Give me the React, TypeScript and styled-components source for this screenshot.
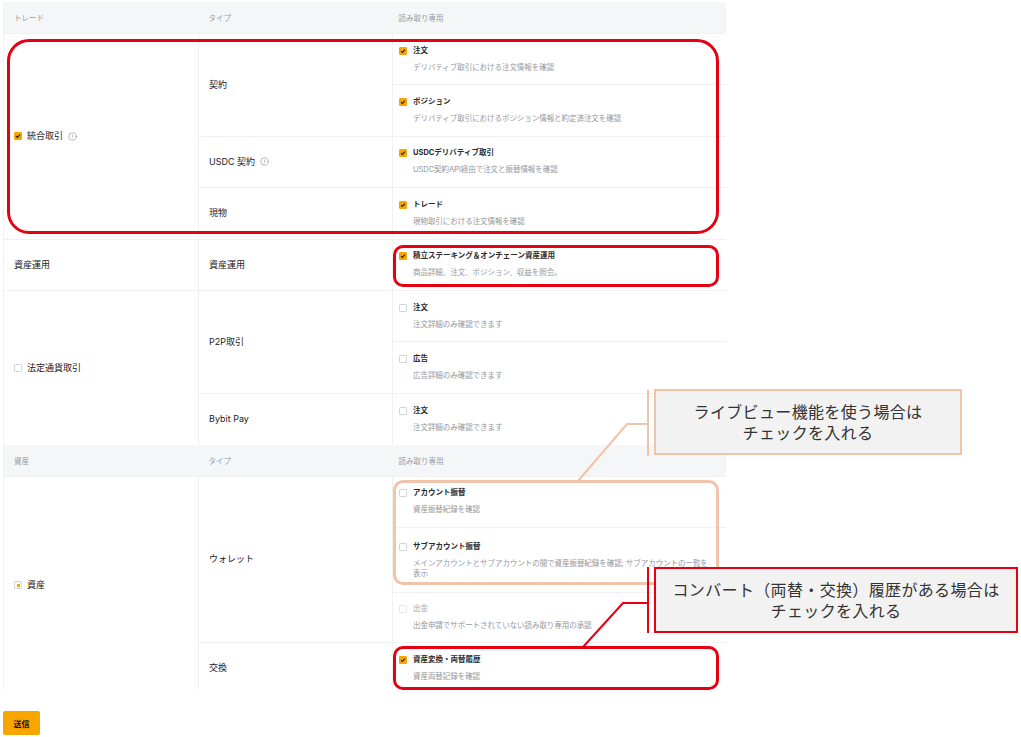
import styled, { createGlobalStyle } from "styled-components";
import { CircleAlert } from "lucide-react";

type BoxState = "checked" | "unchecked" | "indeterminate" | "disabled";

type Item = {
  label: string;
  desc: string;
  state: BoxState;
  height?: number;
};

type TypeRow = {
  name: string;
  info?: boolean;
  items: Item[];
};

type Group = {
  name: string;
  state?: BoxState;
  info?: boolean;
  types: TypeRow[];
};

type Section = {
  head: [string, string, string];
  groups: Group[];
};

const sections: Section[] = [
  {
    head: ["トレード", "タイプ", "読み取り専用"],
    groups: [
      {
        name: "統合取引",
        state: "checked",
        info: true,
        types: [
          {
            name: "契約",
            items: [
              { label: "注文", desc: "デリバティブ取引における注文情報を確認", state: "checked" },
              { label: "ポジション", desc: "デリバティブ取引におけるポジション情報と約定済注文を確認", state: "checked" },
            ],
          },
          {
            name: "USDC 契約",
            info: true,
            items: [{ label: "USDCデリバティブ取引", desc: "USDC契約API経由で注文と振替情報を確認", state: "checked" }],
          },
          {
            name: "現物",
            items: [{ label: "トレード", desc: "現物取引における注文情報を確認", state: "checked" }],
          },
        ],
      },
      {
        name: "資産運用",
        types: [
          {
            name: "資産運用",
            items: [{ label: "積立ステーキング＆オンチェーン資産運用", desc: "商品詳細、注文、ポジション、収益を照会。", state: "checked" }],
          },
        ],
      },
      {
        name: "法定通貨取引",
        state: "unchecked",
        types: [
          {
            name: "P2P取引",
            items: [
              { label: "注文", desc: "注文詳細のみ確認できます", state: "unchecked" },
              { label: "広告", desc: "広告詳細のみ確認できます", state: "unchecked" },
            ],
          },
          {
            name: "Bybit Pay",
            items: [{ label: "注文", desc: "注文詳細のみ確認できます", state: "unchecked" }],
          },
        ],
      },
    ],
  },
  {
    head: ["資産", "タイプ", "読み取り専用"],
    groups: [
      {
        name: "資産",
        state: "indeterminate",
        types: [
          {
            name: "ウォレット",
            items: [
              { label: "アカウント振替", desc: "資産振替紀録を確認", state: "unchecked" },
              {
                label: "サブアカウント振替",
                desc: "メインアカウントとサブアカウントの間で資産振替紀録を確認; サブアカウントの一覧を\n表示",
                state: "unchecked",
                height: 65,
              },
              { label: "出金", desc: "出金申請でサポートされていない読み取り専用の承認", state: "disabled", height: 50 },
            ],
          },
          {
            name: "交換",
            items: [{ label: "資産変換・両替履歴", desc: "資産両替記録を確認", state: "checked" }],
          },
        ],
      },
    ],
  },
];

/* style */
const GlobalStyle = createGlobalStyle`
  html, body {
    margin: 0;
    background: #ffffff;
  }
  body {
    font-family: "Inter", "Noto Sans CJK JP", sans-serif;
    color: #1e2026;
  }
`;

const Page = styled.div`
  position: relative;
  width: 1021px;
  height: 737px;
  padding: 2px 3px 0;
  box-sizing: border-box;
  overflow: hidden;
`;

const TableBox = styled.div`
  width: 723px;
  height: 688px;
  overflow: hidden;
`;

const Table = styled.table`
  width: 723px;
  border-collapse: collapse;
  table-layout: fixed;
  border-left: 1px solid #f3f3f3;
  border-right: 1px solid #f3f3f3;
`;

const HeadCell = styled.th<{ $pad: number }>`
  height: 31px;
  padding: 0 0 0 ${(p) => p.$pad}px;
  background: #f4f6f8;
  color: #9a9ca0;
  font-size: 7.5px;
  font-weight: 400;
  text-align: left;
  vertical-align: middle;
`;

const Cell = styled.td<{ $pad: number }>`
  padding: 0 0 0 ${(p) => p.$pad}px;
  border-top: 1px solid #f1f1f1;
  border-right: 1px solid #f1f1f1;
  vertical-align: middle;
  font-size: 9px;
  color: #1e2026;
`;

const NameLine = styled.div`
  display: flex;
  align-items: center;
  gap: 5px;
  line-height: 12px;
`;

const InfoIcon = styled(CircleAlert)`
  color: #8a8d93;
`;

const ItemCell = styled.td`
  padding: 0 6px;
  border-top: 1px solid #f1f1f1;
  vertical-align: middle;
`;

const ItemBody = styled.div`
  display: flex;
  flex-direction: column;
  gap: 7px;
`;

const ItemLabel = styled.div<{ $muted: boolean }>`
  display: flex;
  align-items: center;
  gap: 6px;
  font-size: 7.5px;
  line-height: 10px;
  font-weight: 700;
  color: ${(p) => (p.$muted ? "#c4c6ca" : "#2a2c31")};
`;

const ItemDesc = styled.div`
  padding-left: 14px;
  font-size: 7.5px;
  line-height: 10px;
  letter-spacing: -0.05px;
  color: #94979c;
  white-space: pre;
`;

const Box = styled.span<{ $state: BoxState }>`
  display: inline-flex;
  align-items: center;
  justify-content: center;
  flex: none;
  width: 8px;
  height: 8px;
  box-sizing: border-box;
  border-radius: 1px;
  border: 1px solid
    ${(p) =>
      p.$state === "checked" ? "#f7a600" : p.$state === "disabled" ? "#e6e7e9" : "#d3d5d9"};
  background: ${(p) => (p.$state === "checked" ? "#f7a600" : "#ffffff")};
`;

const Dot = styled.span`
  width: 3px;
  height: 3px;
  background: #f7a600;
`;

const SubmitButton = styled.button`
  display: block;
  margin-top: 21px;
  width: 37px;
  height: 24px;
  padding: 0;
  border: none;
  border-radius: 2px;
  background: #f7a600;
  color: #121214;
  font-family: "Inter", "Noto Sans CJK JP", sans-serif;
  font-size: 8px;
  font-weight: 700;
`;

const Frame = styled.div<{ $x: number; $y: number; $w: number; $h: number; $color: string; $r: number }>`
  position: absolute;
  left: ${(p) => p.$x}px;
  top: ${(p) => p.$y}px;
  width: ${(p) => p.$w}px;
  height: ${(p) => p.$h}px;
  box-sizing: border-box;
  border: 3px solid ${(p) => p.$color};
  border-radius: ${(p) => p.$r}px;
  pointer-events: none;
`;

const Callout = styled.div<{ $x: number; $y: number; $w: number; $color: string }>`
  position: absolute;
  left: ${(p) => p.$x}px;
  top: ${(p) => p.$y}px;
  width: ${(p) => p.$w}px;
  height: 66px;
  box-sizing: border-box;
  display: flex;
  align-items: center;
  justify-content: center;
  border: 2px solid ${(p) => p.$color};
  background: #f2f2f2;
  color: #333333;
  font-family: "Noto Sans CJK JP", sans-serif;
  font-size: 16px;
  line-height: 21px;
  letter-spacing: 0.35px;
  text-align: center;
  white-space: pre;
`;

const Leaders = styled.svg`
  position: absolute;
  left: 0;
  top: 0;
  pointer-events: none;
`;

const Check = ({ state }: { state: BoxState }) => (
  <Box $state={state}>
    {state === "checked" && (
      <svg width="6" height="6" viewBox="0 0 6 6">
        <path d="M1 3.1 L2.4 4.4 L5 1.6" fill="none" stroke="#1e2026" strokeWidth="1.1" />
      </svg>
    )}
    {state === "indeterminate" && <Dot />}
  </Box>
);

const App = () => {
  const rows: JSX.Element[] = [];

  sections.forEach((section, si) => {
    rows.push(
      <tr key={`h${si}`}>
        <HeadCell $pad={10}>{section.head[0]}</HeadCell>
        <HeadCell $pad={10}>{section.head[1]}</HeadCell>
        <HeadCell $pad={6}>{section.head[2]}</HeadCell>
      </tr>
    );
    section.groups.forEach((group, gi) => {
      const groupSpan = group.types.reduce((n, t) => n + t.items.length, 0);
      group.types.forEach((type, ti) => {
        type.items.forEach((item, ii) => {
          rows.push(
            <tr key={`${si}-${gi}-${ti}-${ii}`} style={{ height: item.height ?? 51.4 }}>
              {ti === 0 && ii === 0 && (
                <Cell $pad={10} rowSpan={groupSpan}>
                  <NameLine>
                    {group.state && <Check state={group.state} />}
                    {group.name}
                    {group.info && <InfoIcon size={9} strokeWidth={1.6} />}
                  </NameLine>
                </Cell>
              )}
              {ii === 0 && (
                <Cell $pad={10} rowSpan={type.items.length}>
                  <NameLine>
                    {type.name}
                    {type.info && <InfoIcon size={9} strokeWidth={1.6} />}
                  </NameLine>
                </Cell>
              )}
              <ItemCell>
                <ItemBody>
                  <ItemLabel $muted={item.state === "disabled"}>
                    <Check state={item.state} />
                    {item.label}
                  </ItemLabel>
                  <ItemDesc>{item.desc}</ItemDesc>
                </ItemBody>
              </ItemCell>
            </tr>
          );
        });
      });
    });
  });

  return (
    <Page>
      <GlobalStyle />
      <TableBox>
        <Table>
          <colgroup>
            <col style={{ width: 195 }} />
            <col style={{ width: 194 }} />
            <col style={{ width: 334 }} />
          </colgroup>
          <tbody>{rows}</tbody>
        </Table>
      </TableBox>
      <SubmitButton>送信</SubmitButton>

      <Frame $x={7} $y={39} $w={712} $h={195} $color="#e50012" $r={22} />
      <Frame $x={393} $y={245} $w={326} $h={42} $color="#e50012" $r={10} />
      <Frame $x={393} $y={480} $w={326} $h={105} $color="#f1c4aa" $r={10} />
      <Frame $x={393} $y={646} $w={326} $h={44} $color="#e50012" $r={10} />

      <Leaders width="1021" height="737" viewBox="0 0 1021 737">
        <path d="M648 390 V456 M648 424 H627 L578 481" fill="none" stroke="#f1c4aa" strokeWidth="2" />
        <path d="M648 567 V633 M648 603 H623 L583 647" fill="none" stroke="#e50012" strokeWidth="2" />
      </Leaders>

      <Callout $x={654} $y={389} $w={308} $color="#f1c4aa">
        {"ライブビュー機能を使う場合は\nチェックを入れる"}
      </Callout>
      <Callout $x={654} $y={567} $w={364} $color="#e50012">
        {"コンバート（両替・交換）履歴がある場合は\nチェックを入れる"}
      </Callout>
    </Page>
  );
};

export default App;
